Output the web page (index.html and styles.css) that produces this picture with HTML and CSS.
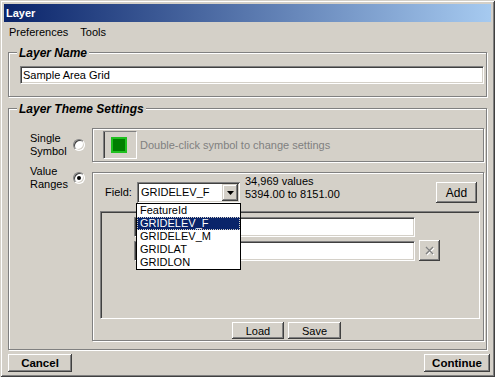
FILE: index.html
```html
<!DOCTYPE html>
<html lang="en">
<head>
    <meta charset="UTF-8">
    <title>Layer</title>
    <link rel="stylesheet" href="styles.css">
</head>
<body>

<div class="window">
    <div class="titlebar">Layer</div>

    <div class="menubar">
        <span>Preferences</span>
        <span>Tools</span>
    </div>

    <div class="content">
        <!-- Layer name -->
        <div class="group name-group">
            <div class="group-title">Layer Name</div>
            <input class="textbox name-input" type="text" value="Sample Area Grid">
        </div>

        <!-- Theme settings -->
        <div class="group theme-group">
            <div class="group-title">Layer Theme Settings</div>

            <div class="theme-row symbol-row">
                <div class="option">
                    <span class="option-label">Single<br>Symbol</span>
                    <span class="radio"></span>
                </div>
                <div class="panel symbol-panel">
                    <div class="swatch"><span class="swatch-fill"></span></div>
                    <span class="hint">Double-click symbol to change settings</span>
                </div>
            </div>

            <div class="theme-row ranges-row">
                <div class="option">
                    <span class="option-label">Value<br>Ranges</span>
                    <span class="radio checked"></span>
                </div>
                <div class="panel ranges-panel">
                    <div class="field-row">
                        <span class="field-label">Field:</span>
                        <div class="combo">
                            <span class="combo-text">GRIDELEV_F</span>
                            <span class="combo-btn">
                                <svg width="7" height="4" viewBox="0 0 7 4"><path d="M0 0h7L3.5 4z" fill="#000"/></svg>
                            </span>
                            <ul class="combo-list">
                                <li>FeatureId</li>
                                <li class="selected">GRIDELEV_F</li>
                                <li>GRIDELEV_M</li>
                                <li>GRIDLAT</li>
                                <li>GRIDLON</li>
                            </ul>
                        </div>
                        <div class="stats">
                            <div>34,969 values</div>
                            <div>5394.00 to 8151.00</div>
                        </div>
                        <button class="btn add-btn">Add</button>
                    </div>

                    <div class="range-list">
                        <div class="range-row">
                            <span class="textbox range-box"></span>
                        </div>
                        <div class="range-row">
                            <span class="textbox range-box"></span>
                            <button class="btn del-btn">
                                <svg width="10" height="10" viewBox="0 0 10 10">
                                    <path d="M2 2l7 7M9 2l-7 7" stroke="#fff" stroke-width="1.2"/>
                                    <path d="M1 1l7 7M8 1l-7 7" stroke="#808080" stroke-width="1.4"/>
                                </svg>
                            </button>
                        </div>
                    </div>

                    <div class="load-row">
                        <button class="btn load-btn">Load</button>
                        <button class="btn save-btn">Save</button>
                    </div>
                </div>
            </div>
        </div>
    </div>

    <div class="footer">
        <button class="btn big-btn cancel-btn">Cancel</button>
        <button class="btn big-btn continue-btn">Continue</button>
    </div>
</div>

</body>
</html>
```

FILE: styles.css
```css
* {
    box-sizing: border-box;
}
body {
    margin: 0;
    font-family: "Liberation Sans", Arial, sans-serif;
    font-size: 11px;
    color: #000;
    background: #d4d0c8;
}
.window {
    width: 495px;
    height: 377px;
    padding: 4px;
    background: #d4d0c8;
    box-shadow: inset 1px 1px 0 #d4d0c8, inset -1px -1px 0 #404040,
                inset 2px 2px 0 #fff, inset -2px -2px 0 #808080;
}
.titlebar {
    height: 18px;
    line-height: 18px;
    padding-left: 2px;
    color: #fff;
    font-weight: bold;
    background: linear-gradient(to right, #0a246a, #a6caf0);
}
.menubar {
    display: flex;
    height: 20px;
    line-height: 20px;
}
.menubar span {
    padding: 0 6px 0 5px;
    margin-right: 1px;
}
.content {
    padding: 0 4px;
}

/* etched group boxes */
.group {
    border: 1px solid #808080;
    box-shadow: 1px 1px 0 #fff, inset 1px 1px 0 #fff;
}
.group-title {
    display: table;
    margin: -7px 0 0 -3px;
    padding: 0 2px;
    line-height: 14px;
    font-size: 12px;
    font-weight: bold;
    font-style: italic;
    background: #d4d0c8;
}
.name-group {
    margin-top: 10px;
    padding: 0 2px 12px 11px;
}
.theme-group {
    margin-top: 11px;
    padding: 0 2px 8px 11px;
}

.textbox {
    display: block;
    height: 18px;
    padding: 0 2px;
    font: inherit;
    color: #000;
    background: #fff;
    border: 1px solid;
    border-color: #808080 #fff #fff #808080;
    box-shadow: inset 1px 1px 0 #404040, inset -1px -1px 0 #d4d0c8;
    outline: none;
}
.name-input {
    width: 100%;
    margin-top: 6px;
}

.theme-row {
    display: flex;
}
.symbol-row {
    margin-top: 12px;
    align-items: center;
}
.ranges-row {
    margin-top: 3px;
    align-items: flex-start;
}
.option {
    width: 72px;
    flex: none;
    display: flex;
    align-items: center;
    padding-left: 10px;
}
.option-label {
    flex: 1;
    line-height: 13px;
}
.radio {
    position: relative;
    width: 12px;
    height: 12px;
    margin-right: 7px;
    border-radius: 50%;
    background: #fff;
    border: 1px solid;
    border-color: #808080 #fff #fff #808080;
    box-shadow: inset 1px 1px 0 #404040, inset -1px -1px 0 #d4d0c8;
}
.radio.checked::after {
    content: "";
    position: absolute;
    left: 3px;
    top: 3px;
    width: 4px;
    height: 4px;
    border-radius: 50%;
    background: #000;
}

.panel {
    flex: 1;
    border: 1px solid #808080;
    box-shadow: 1px 1px 0 #fff, inset 1px 1px 0 #fff;
}
.symbol-panel {
    height: 34px;
    display: flex;
    align-items: center;
    padding-left: 10px;
}
.swatch {
    width: 34px;
    height: 28px;
    display: flex;
    align-items: center;
    justify-content: center;
    padding-right: 2px;
    border: 1px solid;
    border-color: #808080 #fff #fff #808080;
    box-shadow: inset 1px 0 0 #404040;
}
.swatch-fill {
    width: 16px;
    height: 16px;
    background: #007f00;
    border: 2px solid #1fc01f;
}
.hint {
    margin-left: 3px;
    color: #808080;
}

.ranges-panel {
    margin-top: 7px;
    display: flex;
    flex-direction: column;
    padding: 2px 3px 1px 7px;
}
.field-row {
    display: flex;
    align-items: flex-start;
    padding-left: 5px;
}
.field-label {
    width: 32px;
    margin-top: 7px;
    line-height: 21px;
}
.combo {
    position: relative;
    display: flex;
    width: 103px;
    height: 21px;
    margin-top: 7px;
    padding: 2px;
    background: #fff;
    box-shadow: inset 1px 1px 0 #808080, inset -1px -1px 0 #fff,
                inset 2px 2px 0 #404040, inset -2px -2px 0 #d4d0c8;
}
.combo-text {
    flex: 1;
    padding-left: 2px;
    line-height: 17px;
}
.combo-btn {
    width: 16px;
    height: 17px;
    display: flex;
    align-items: center;
    justify-content: center;
    padding-top: 1px;
    background: #d4d0c8;
    box-shadow: inset -1px -1px 0 #404040, inset 1px 1px 0 #d4d0c8,
                inset -2px -2px 0 #808080, inset 2px 2px 0 #fff;
}
.combo-list {
    position: absolute;
    left: -1px;
    top: 21px;
    width: 105px;
    margin: 0;
    padding: 0;
    list-style: none;
    background: #fff;
    border: 1px solid #000;
    z-index: 2;
}
.combo-list li {
    height: 13px;
    line-height: 13px;
    padding-left: 3px;
}
.combo-list li.selected {
    color: #fff;
    background: #0a246a;
    outline: 1px dotted #d4d0c8;
    outline-offset: -1px;
}
.stats {
    margin-left: 5px;
    line-height: 13px;
}

.btn {
    padding: 0;
    font: inherit;
    color: #000;
    background: #d4d0c8;
    border: none;
    box-shadow: inset -1px -1px 0 #404040, inset 1px 1px 0 #fff,
                inset -2px -2px 0 #808080, inset 2px 2px 0 #d4d0c8;
}
.add-btn {
    width: 41px;
    height: 21px;
    margin: 7px 3px 0 auto;
    font-size: 12px;
}

.range-list {
    height: 108px;
    margin-top: 8px;
    padding: 5px 0 0 33px;
    border: 1px solid;
    border-color: #808080 #fff #fff #808080;
    box-shadow: inset 1px 1px 0 #404040, inset -1px -1px 0 #d4d0c8;
}
.range-row {
    display: flex;
    align-items: center;
    gap: 4px;
    margin-bottom: 3px;
}
.range-box {
    width: 281px;
    height: 20px;
}
.del-btn {
    width: 21px;
    height: 21px;
    display: flex;
    align-items: center;
    justify-content: center;
}

.load-row {
    display: flex;
    justify-content: center;
    gap: 4px;
    margin-top: 3px;
    padding-right: 7px;
}
.load-btn,
.save-btn {
    height: 17px;
}
.load-btn {
    width: 52px;
}
.save-btn {
    width: 53px;
}

.footer {
    display: flex;
    justify-content: space-between;
    margin-top: 4px;
    padding: 0 1px 0 4px;
}
.big-btn {
    height: 18px;
    font-weight: bold;
    font-size: 11.5px;
}
.cancel-btn {
    width: 64px;
}
.continue-btn {
    width: 66px;
}
```
